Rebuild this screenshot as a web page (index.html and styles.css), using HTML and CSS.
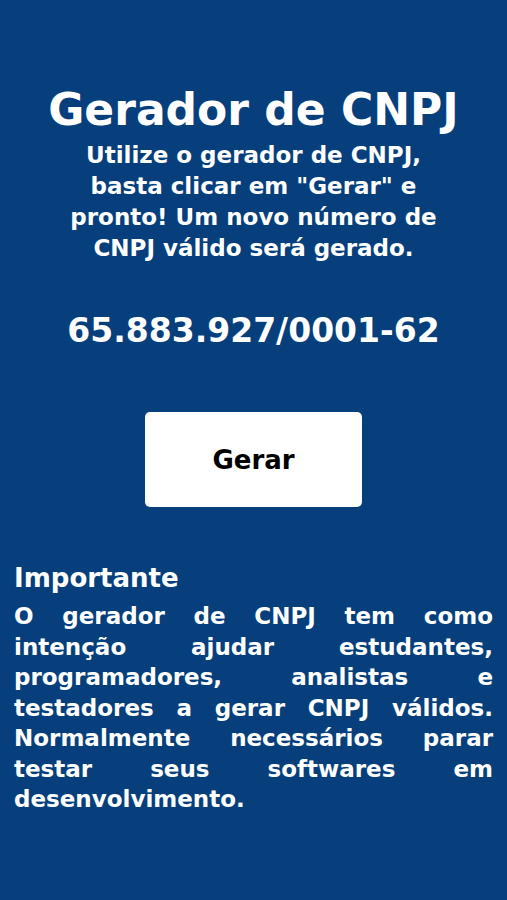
FILE: index.html
```html
<!DOCTYPE html>
<html lang="pt-BR">
<head>
  <meta charset="UTF-8">
  <meta name="viewport" content="width=device-width, initial-scale=1.0">
  <title>Gerador de CNPJ</title>
  <link rel="stylesheet" href="styles.css">
</head>
<body>
  <div class="page">
    <div class="header">
      <h1>Gerador de CNPJ</h1>
      <p class="lead">Utilize o gerador de CNPJ, basta clicar em "Gerar" e pronto! Um novo número de CNPJ válido será gerado.</p>
    </div>

    <div class="result" id="cnpj">65.883.927/0001-62</div>

    <div class="actions">
      <button class="btn" onclick="gerar()">Gerar</button>
    </div>

    <div class="info">
      <h2>Importante</h2>
      <p>O gerador de CNPJ tem como intenção ajudar estudantes, programadores, analistas e testadores a gerar CNPJ válidos. Normalmente necessários parar testar seus softwares em desenvolvimento.</p>
    </div>
  </div>

  <script>
    function digito(nums, pesos) {
      let soma = 0;
      for (let i = 0; i < nums.length; i++) {
        soma += nums[i] * pesos[i];
      }
      const resto = soma % 11;
      return resto < 2 ? 0 : 11 - resto;
    }

    function gerar() {
      const n = [];
      for (let i = 0; i < 8; i++) n.push(Math.floor(Math.random() * 10));
      n.push(0, 0, 0, 1);
      n.push(digito(n, [5, 4, 3, 2, 9, 8, 7, 6, 5, 4, 3, 2]));
      n.push(digito(n, [6, 5, 4, 3, 2, 9, 8, 7, 6, 5, 4, 3, 2]));
      const s = n.join('');
      document.getElementById('cnpj').textContent =
        s.slice(0, 2) + '.' + s.slice(2, 5) + '.' + s.slice(5, 8) + '/' + s.slice(8, 12) + '-' + s.slice(12);
    }
  </script>
</body>
</html>
```

FILE: styles.css
```css
html, body {
  margin: 0;
  padding: 0;
}
body {
  background-color: #063f7c;
  color: #fff;
  font-family: "DejaVu Sans", sans-serif;
  font-weight: bold;
  min-height: 900px;
}
.page {
  padding: 80px 14px 40px;
}
.header {
  text-align: center;
}
h1 {
  font-size: 44px;
  margin: 0;
  line-height: 60px;
}
.lead {
  font-size: 23px;
  line-height: 31px;
  width: 380px;
  margin: 0 auto;
}
.result {
  text-align: center;
  font-size: 33px;
  margin-top: 47px;
  line-height: 40px;
}
.actions {
  display: flex;
  justify-content: center;
  margin-top: 61px;
}
.btn {
  width: 217px;
  height: 95px;
  background: #fff;
  color: #000;
  border: none;
  border-radius: 5px;
  font-family: "DejaVu Sans", sans-serif;
  font-weight: bold;
  font-size: 26px;
  cursor: pointer;
}
.info {
  margin-top: 55px;
}
h2 {
  font-size: 26px;
  margin: 0 0 7px;
  line-height: 32px;
}
.info p {
  font-size: 23px;
  line-height: 30.5px;
  margin: 0;
  text-align: justify;
}
```
